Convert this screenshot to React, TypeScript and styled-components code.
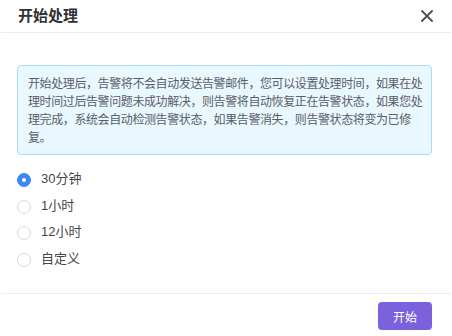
import React, { useState } from "react";
import styled, { createGlobalStyle } from "styled-components";

const GlobalStyle = createGlobalStyle`
  html, body {
    margin: 0;
    padding: 0;
    background: #ffffff;
  }
  body {
    font-family: "Liberation Sans", "Noto Sans CJK SC", sans-serif;
    -webkit-font-smoothing: antialiased;
  }
`;

const Dialog = styled.div`
  width: 452px;
  height: 336px;
  background: #ffffff;
  display: flex;
  flex-direction: column;
  box-sizing: border-box;
`;

const Header = styled.div`
  height: 32px;
  margin: 0 1px;
  padding: 0 17px;
  display: flex;
  align-items: center;
  justify-content: space-between;
  border-bottom: 1px solid #e9ebf0;
`;

const Title = styled.div`
  font-size: 15px;
  font-weight: 700;
  color: #303133;
  margin-top: -4px;
`;

const CloseButton = styled.button`
  border: none;
  background: none;
  padding: 0;
  width: 14px;
  height: 14px;
  display: flex;
  align-items: center;
  justify-content: center;
  cursor: pointer;
`;

const Body = styled.div`
  flex: 1;
  padding: 32px 20px 0 17px;
`;

const Notice = styled.div`
  border: 1px solid #a8dcf8;
  background: #e9f7fe;
  border-radius: 4px;
  padding: 8px 6px 8px 10px;
  font-size: 12px;
  letter-spacing: -0.4px;
  line-height: 18px;
  color: #5a5e66;
  font-family: "Noto Sans CJK SC", sans-serif;
`;

const Options = styled.div`
  margin-top: 12px;
  display: flex;
  flex-direction: column;
`;

const OptionRow = styled.label`
  height: 26.5px;
  display: flex;
  align-items: center;
  gap: 10px;
  cursor: pointer;
`;

const RadioDot = styled.span<{ checked: boolean }>`
  width: 14px;
  height: 14px;
  box-sizing: border-box;
  border-radius: 50%;
  border: 1px solid ${({ checked }) => (checked ? "#3d87f5" : "#d6d8dc")};
  background: ${({ checked }) => (checked ? "#3d87f5" : "#ffffff")};
  display: flex;
  align-items: center;
  justify-content: center;
  &::after {
    content: "";
    width: 4px;
    height: 4px;
    border-radius: 50%;
    background: #ffffff;
    display: ${({ checked }) => (checked ? "block" : "none")};
  }
`;

const OptionText = styled.span`
  font-size: 13px;
  color: #43464d;
  line-height: 16px;
  margin-top: -2px;
`;

const Footer = styled.div`
  margin: 0 1px;
  border-top: 1px solid #eceef2;
  height: 42px;
  padding: 0 19px 0 0;
  display: flex;
  align-items: flex-start;
  justify-content: flex-end;
`;

const PrimaryButton = styled.button`
  margin-top: 8px;
  width: 54px;
  height: 28px;
  border: none;
  border-radius: 4px;
  background: #7b62dc;
  color: #ffffff;
  font-size: 12px;
  font-family: "Noto Sans CJK SC", sans-serif;
  cursor: pointer;
`;

const options = ["30分钟", "1小时", "12小时", "自定义"];

export default function App() {
  const [selected, setSelected] = useState(0);
  return (
    <>
      <GlobalStyle />
      <Dialog>
        <Header>
          <Title>开始处理</Title>
          <CloseButton aria-label="关闭">
            <svg width="12" height="12" viewBox="0 0 12 12">
              <path
                d="M1 1 L11 11 M11 1 L1 11"
                stroke="#4a4d55"
                strokeWidth="1.8"
                strokeLinecap="round"
              />
            </svg>
          </CloseButton>
        </Header>
        <Body>
          <Notice>
            开始处理后，告警将不会自动发送告警邮件，您可以设置处理时间，如果在处理时间过后告警问题未成功解决，则告警将自动恢复正在告警状态，如果您处理完成，系统会自动检测告警状态，如果告警消失，则告警状态将变为已修复。
          </Notice>
          <Options>
            {options.map((label, i) => (
              <OptionRow key={label} onClick={() => setSelected(i)}>
                <RadioDot checked={selected === i} />
                <OptionText>{label}</OptionText>
              </OptionRow>
            ))}
          </Options>
        </Body>
        <Footer>
          <PrimaryButton>开始</PrimaryButton>
        </Footer>
      </Dialog>
    </>
  );
}
